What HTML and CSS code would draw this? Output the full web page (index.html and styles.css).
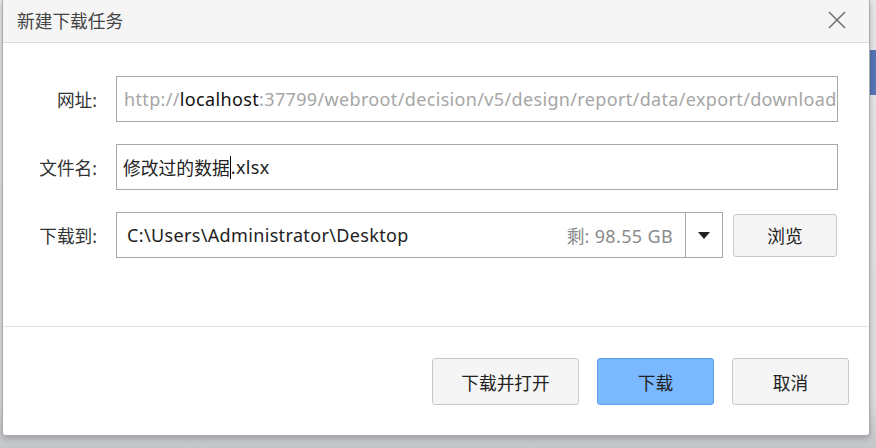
FILE: index.html
```html
<!DOCTYPE html>
<html lang="zh-CN">
<head>
<meta charset="utf-8">
<title>新建下载任务</title>
<link rel="stylesheet" href="styles.css">
</head>
<body>
<div class="backdrop-blue"></div>
<div class="backdrop-line l1"></div>
<div class="backdrop-line l2"></div>
<div class="backdrop-line l3"></div>
<div class="dialog">
  <div class="header">
    <span class="title">新建下载任务</span>
    <svg class="close" width="20" height="20" viewBox="0 0 20 20"><path d="M2 2 L18 18 M18 2 L2 18" stroke="#6e6e6e" stroke-width="1.5" fill="none"/></svg>
  </div>
  <div class="body">
    <div class="row">
      <label class="label">网址:</label>
      <div class="field url"><span class="dim lat">http://</span><span class="host lat">localhost</span><span class="dim lat">:37799/webroot/decision/v5/design/report/data/export/download</span></div>
    </div>
    <div class="row">
      <label class="label">文件名:</label>
      <div class="field"><span>修改过的数据</span><span class="caret"></span><span class="lat">.xlsx</span></div>
    </div>
    <div class="row">
      <label class="label">下载到:</label>
      <div class="field path">
        <span class="path-text lat">C:\Users\Administrator\Desktop</span>
        <span class="free">剩<span class="lat">: 98.55 GB</span></span>
        <span class="drop"><svg width="12" height="7" viewBox="0 0 12 7"><path d="M0 0 H12 L6 7 Z" fill="#222"/></svg></span>
      </div>
      <button class="btn browse">浏览</button>
    </div>
  </div>
  <div class="footer">
    <button class="btn">下载并打开</button>
    <button class="btn primary">下载</button>
    <button class="btn">取消</button>
  </div>
</div>
</body>
</html>
```
FILE: styles.css
```css
html, body {
  margin: 0;
  padding: 0;
}
body {
  width: 876px;
  height: 448px;
  overflow: hidden;
  position: relative;
  background: linear-gradient(to bottom, #e6e8eb 0%, #dcdee2 90%, #c3c5c8 100%);
  font-family: "Noto Sans", "Noto Sans CJK SC", sans-serif;
  color: #222;
}
.backdrop-blue {
  position: absolute;
  right: 0;
  top: 50px;
  width: 6px;
  height: 45px;
  background: #5677b8;
}
.backdrop-line {
  position: absolute;
  top: 436px;
  width: 1px;
  height: 12px;
  background: #c2c4c8;
}
.l1 { left: 189px; }
.l2 { left: 201px; }
.l3 { left: 529px; }
.dialog {
  position: relative;
  z-index: 1;
  width: 866px;
  height: 435px;
  margin-left: 2px;
  background: #fff;
  border: 1px solid #a9abae;
  border-top: none;
  border-radius: 0 0 3px 3px;
  box-shadow: 0 2px 6px rgba(0,0,0,0.25);
  display: flex;
  flex-direction: column;
}
.header {
  height: 43px;
  background: #f5f5f5;
  border-bottom: 1px solid #dcdcdc;
  display: flex;
  align-items: center;
  justify-content: space-between;
  padding: 0 22px 0 14px;
  box-sizing: border-box;
  flex: none;
}
.title {
  font-size: 17.7px;
  color: #444;
  margin-top: -3px;
}
.close {
  margin-top: -3px;
}
.body {
  display: flex;
  flex-direction: column;
  gap: 22px;
  padding: 33px 0 0 0;
  height: 284px;
  box-sizing: border-box;
  border-bottom: 1px solid #e4e4e4;
  flex: none;
}
.row {
  display: flex;
  align-items: center;
}
.label {
  width: 94px;
  text-align: right;
  font-size: 17.7px;
  color: #333;
  margin-right: 19px;
}
.field {
  width: 722px;
  height: 46px;
  box-sizing: border-box;
  border: 1px solid #a8a8a8;
  display: flex;
  align-items: center;
  padding: 0 6px;
  font-size: 17.8px;
  white-space: nowrap;
  overflow: hidden;
  color: #222;
}
.lat {
  font-size: 18px;
  letter-spacing: 0.35px;
}
.url {
  padding-left: 7px;
}
.dim {
  color: #a6a6a6;
}
.host {
  color: #111;
}
.caret {
  display: inline-block;
  width: 1px;
  height: 23px;
  background: #000;
}
.path {
  width: 607px;
  padding: 0 0 0 10px;
}
.path-text {
  flex: 1;
}
.free {
  color: #8a8a8a;
  margin-right: 12px;
}
.drop {
  flex: none;
  width: 36px;
  height: 100%;
  border-left: 1px solid #a8a8a8;
  display: flex;
  align-items: center;
  justify-content: center;
}
.btn {
  font-family: "Noto Sans", "Noto Sans CJK SC", sans-serif;
  font-size: 17.7px;
  color: #222;
  background: #f5f5f5;
  border: 1px solid #c8c8c8;
  border-radius: 3px;
  height: 47px;
  width: 117px;
  padding: 0;
}
.browse {
  width: 104px;
  height: 43px;
  margin-left: 10px;
}
.footer {
  flex: 1;
  display: flex;
  justify-content: flex-end;
  align-items: flex-start;
  gap: 18px;
  padding: 31px 20px 0 0;
}
.footer .btn:first-child {
  width: 147px;
}
.primary {
  background: #7ab8ff;
  border-color: #5d9ff0;
}
```
